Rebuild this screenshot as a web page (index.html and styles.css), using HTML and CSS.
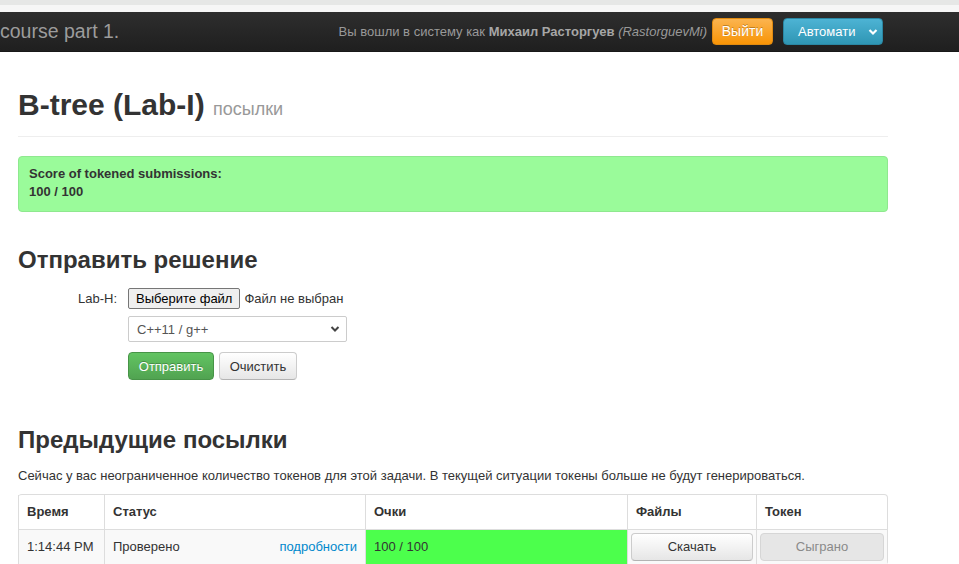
FILE: index.html
```html
<!DOCTYPE html>
<html lang="ru">
<head>
<meta charset="utf-8">
<title>B-tree (Lab-I)</title>
<link rel="stylesheet" href="styles.css">
</head>
<body>
<div class="topstrip"><div class="strip-a"></div><div class="strip-b"></div></div>
<div class="navbar">
  <div class="brand">course part 1.</div>
  <div class="nav-right">
    <span class="login-text">Вы вошли в систему как <b>Михаил Расторгуев</b> <i>(RastorguevMi)</i></span>
    <span class="btn-warn">Выйти</span>
    <span class="btn-lang"><span class="lang-text">Автомати</span><svg class="chev" width="10" height="8" viewBox="0 0 10 8"><path d="M1.5 2 L5 5.5 L8.5 2" fill="none" stroke="#fff" stroke-width="2.2"/></svg></span>
  </div>
</div>

<div class="container">
  <div class="page-header">
    <h1>B-tree (Lab-I) <small>посылки</small></h1>
  </div>

  <div class="alert">
    <b>Score of tokened submissions:</b><br>
    <b>100 / 100</b>
  </div>

  <h2 class="section-title first">Отправить решение</h2>
  <div class="form">
    <div class="form-row">
      <span class="label">Lab-H:</span>
      <span class="file-btn">Выберите файл</span>
      <span class="file-none">Файл не выбран</span>
    </div>
    <div class="form-row indent">
      <div class="select"><span>C++11 / g++</span><svg width="10" height="8" viewBox="0 0 10 8"><path d="M1.5 2 L5 5.5 L8.5 2" fill="none" stroke="#444" stroke-width="2"/></svg></div>
    </div>
    <div class="form-row indent buttons">
      <span class="btn-success">Отправить</span>
      <span class="btn-default">Очистить</span>
    </div>
  </div>

  <h2 class="section-title second">Предыдущие посылки</h2>
  <p class="note">Сейчас у вас неограниченное количество токенов для этой задачи. В текущей ситуации токены больше не будут генерироваться.</p>

  <table class="subs">
    <thead>
      <tr>
        <th class="c-time">Время</th>
        <th class="c-status">Статус</th>
        <th class="c-score">Очки</th>
        <th class="c-files">Файлы</th>
        <th class="c-token">Токен</th>
      </tr>
    </thead>
    <tbody>
      <tr>
        <td>1:14:44&nbsp;PM</td>
        <td><div class="status"><span>Проверено</span><a href="#">подробности</a></div></td>
        <td class="score-ok">100 / 100</td>
        <td class="cell-btn"><span class="btn-table">Скачать</span></td>
        <td class="cell-btn"><span class="btn-table disabled">Сыграно</span></td>
      </tr>
    </tbody>
  </table>
</div>
</body>
</html>
```

FILE: styles.css
```css
html, body {
  margin: 0;
  padding: 0;
  background: #fff;
  font-family: "Liberation Sans", Arial, Helvetica, sans-serif;
  font-size: 13px;
  color: #333;
  overflow: hidden;
}

.topstrip .strip-a { height: 5px; background: #e6e7e6; }
.topstrip .strip-b { height: 7px; background: #f6f6f6; }

.navbar {
  height: 40px;
  background: linear-gradient(#2e2e2e, #1f1f1f);
  border-bottom: 1px solid #181818;
  box-sizing: border-box;
  display: flex;
  align-items: center;
  justify-content: space-between;
  padding-right: 76px;
}
.brand {
  font-size: 19.5px;
  color: #9c9c9c;
  padding-left: 0;
  margin-top: -1px;
}
.nav-right {
  display: flex;
  align-items: center;
}
.login-text {
  color: #999;
  font-size: 13px;
  margin-right: 5px;
}
.login-text b { color: #a6a6a6; }
.login-text i { color: #999; }

.btn-warn {
  display: inline-flex;
  align-items: center;
  justify-content: center;
  width: 61px;
  height: 27px;
  box-sizing: border-box;
  border-radius: 4px;
  background: linear-gradient(#fbb450, #f89406);
  border: 1px solid #e08a10;
  color: #fff;
  font-size: 14px;
  text-shadow: 0 -1px 0 rgba(0,0,0,.25);
  padding-bottom: 2px;
}
.btn-lang {
  margin-left: 10px;
  display: inline-flex;
  align-items: center;
  width: 100px;
  height: 27px;
  box-sizing: border-box;
  border-radius: 4px;
  background: linear-gradient(#4db3d4, #2f96b4);
  border: 1px solid #2a87a3;
  color: #fff;
  font-size: 13px;
  padding-left: 14px;
}
.lang-text {
  width: 58px;
  white-space: nowrap;
}
.btn-lang .chev { margin-left: 12px; }

.container {
  width: 870px;
  margin-left: 18px;
}

.page-header {
  margin-top: 33px;
  padding-bottom: 7px;
  border-bottom: 1px solid #eee;
}
h1 {
  margin: 0;
  font-size: 30px;
  line-height: 40px;
  font-weight: bold;
  color: #333;
}
h1 small {
  font-size: 18px;
  font-weight: normal;
  color: #999;
}

.alert {
  margin-top: 19px;
  background: #9afb9a;
  border: 1px solid #8fe88f;
  border-radius: 4px;
  padding: 8px 10px 10px;
  line-height: 18px;
  color: #333;
}

.section-title {
  margin: 0;
  font-size: 24px;
  line-height: 30px;
  font-weight: bold;
  color: #333;
}
.section-title.first { margin-top: 33px; }
.section-title.second { margin-top: 45px; }

.form {
  margin-top: 13px;
}
.form-row {
  display: flex;
  align-items: center;
}
.form-row .label {
  width: 99px;
  text-align: right;
  color: #333;
  margin-right: 11px;
}
.form-row.indent { padding-left: 110px; }
.file-btn {
  display: inline-flex;
  align-items: center;
  height: 21px;
  box-sizing: border-box;
  padding: 0 7px;
  border: 1px solid #767676;
  border-radius: 2px;
  background: #efefef;
  color: #000;
  font-size: 13px;
}
.file-none {
  margin-left: 4px;
  color: #333;
}
.select {
  margin-top: 7px;
  width: 219px;
  height: 26px;
  box-sizing: border-box;
  border: 1px solid #ccc;
  border-radius: 2px;
  display: flex;
  align-items: center;
  justify-content: space-between;
  padding: 0 6px 0 8px;
  color: #555;
  background: #fff;
}
.buttons { margin-top: 10px; gap: 5px; }
.btn-success, .btn-default {
  display: inline-flex;
  align-items: center;
  justify-content: center;
  height: 28px;
  box-sizing: border-box;
  border-radius: 4px;
  font-size: 13px;
}
.btn-success {
  width: 86px;
  background: linear-gradient(#62c462, #51a351);
  border: 1px solid #479447;
  color: #fff;
  text-shadow: 0 -1px 0 rgba(0,0,0,.25);
}
.btn-default {
  width: 78px;
  background: linear-gradient(#fff, #e6e6e6);
  border: 1px solid #ccc;
  border-bottom-color: #b3b3b3;
  color: #333;
}

.note {
  margin: 11px 0 0;
  line-height: 20px;
  color: #333;
}

.subs {
  margin-top: 8px;
  width: 870px;
  border-collapse: separate;
  border-spacing: 0;
  border: 1px solid #ddd;
  border-left: 0;
  border-radius: 4px;
}
.subs th, .subs td {
  text-align: left;
  border-left: 1px solid #ddd;
  padding: 0 8px;
  line-height: 20px;
}
.subs th {
  height: 34px;
  font-weight: bold;
}
.subs td {
  border-top: 1px solid #ddd;
  height: 34px;
  background: #f9f9f9;
}
.c-time { width: 69px; }
.c-status { width: 244px; }
.c-score { width: 245px; }
.c-files { width: 112px; }
.status {
  display: flex;
  justify-content: space-between;
}
.status a { color: #0088cc; text-decoration: none; }
.subs td.score-ok { background: #4cff4c; }
.subs td.cell-btn { padding: 0 3px; }
.btn-table {
  display: flex;
  align-items: center;
  justify-content: center;
  height: 28px;
  box-sizing: border-box;
  border-radius: 4px;
  background: linear-gradient(#fff, #e6e6e6);
  border: 1px solid #ccc;
  border-bottom-color: #b3b3b3;
  color: #333;
  font-size: 13px;
}
.btn-table.disabled {
  background: #e6e6e6;
  color: #8a8a8a;
  border-color: #d6d6d6;
}
```
